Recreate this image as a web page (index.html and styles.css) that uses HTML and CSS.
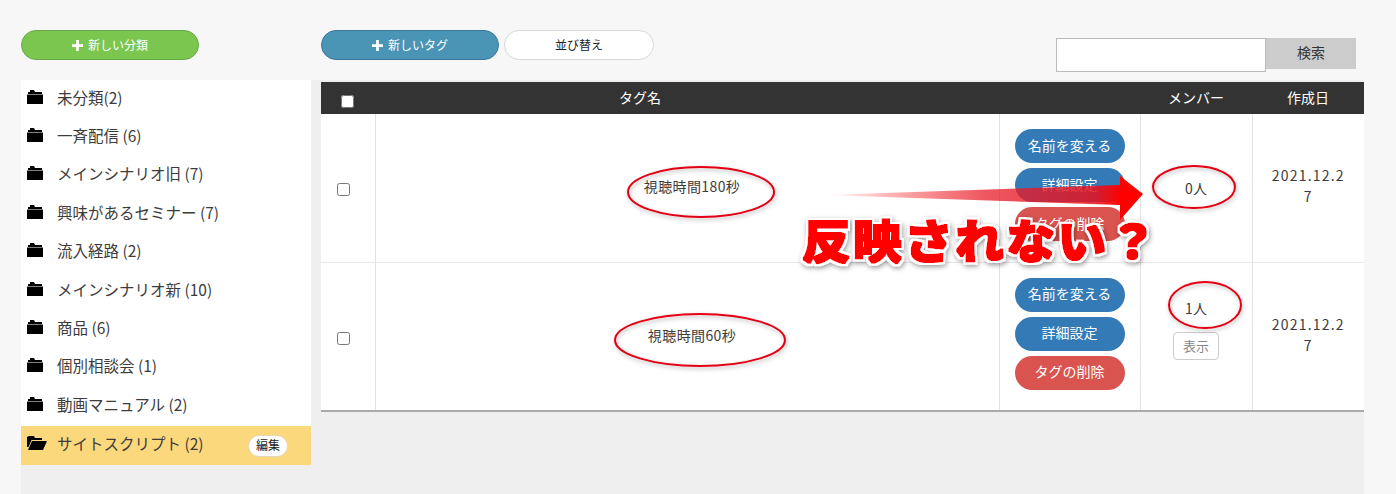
FILE: index.html
```html
<!DOCTYPE html>
<html lang="ja">
<head>
    <meta charset="UTF-8">
    <meta name="viewport" content="width=device-width, initial-scale=1.0">
    <title>タグ管理</title>
    <link rel="stylesheet" href="styles.css">
</head>
<body>
    <svg class="icon-defs" width="0" height="0">
        <symbol id="folder" viewBox="0 0 16 14"><path d="M3 0h4l1 2h7v2H1V2h2zM0 4.600h16V14H0z"/></symbol>
        <symbol id="folder-open" viewBox="0 0 20 14"><path d="M2 0h5l1 2h7v2H4.500L1.500 11H0V1zM5 5h15l-4 9H1z"/></symbol>
        <symbol id="plus" viewBox="0 0 12 12"><path d="M4.500 0h3v4.500H12v3H7.500V12h-3V7.500H0v-3h4.500z"/></symbol>
    </svg>

    <div class="toolbar">
        <div class="toolbar-left">
            <button class="pill pill-green"><svg class="plus"><use href="#plus"/></svg>新しい分類</button>
        </div>
        <div class="toolbar-right">
            <button class="pill pill-blue"><svg class="plus"><use href="#plus"/></svg>新しいタグ</button>
            <button class="pill pill-white">並び替え</button>
            <form class="search">
                <input class="search-input" type="text">
                <button class="search-btn" type="button">検索</button>
            </form>
        </div>
    </div>

    <div class="main">
        <ul class="folders">
            <li><svg class="folder"><use href="#folder"/></svg>未分類(2)</li>
            <li><svg class="folder"><use href="#folder"/></svg>一斉配信 (6)</li>
            <li><svg class="folder"><use href="#folder"/></svg>メインシナリオ旧 (7)</li>
            <li><svg class="folder"><use href="#folder"/></svg>興味があるセミナー (7)</li>
            <li><svg class="folder"><use href="#folder"/></svg>流入経路 (2)</li>
            <li><svg class="folder"><use href="#folder"/></svg>メインシナリオ新 (10)</li>
            <li><svg class="folder"><use href="#folder"/></svg>商品 (6)</li>
            <li><svg class="folder"><use href="#folder"/></svg>個別相談会 (1)</li>
            <li><svg class="folder"><use href="#folder"/></svg>動画マニュアル (2)</li>
            <li class="selected"><svg class="folder folder-wide"><use href="#folder-open"/></svg>サイトスクリプト (2)<button class="edit-btn">編集</button></li>
        </ul>

        <div class="tags">
            <table class="tag-table">
                <thead>
                    <tr>
                        <th class="col-check"><input type="checkbox"></th>
                        <th class="col-name">タグ名</th>
                        <th class="col-actions"></th>
                        <th class="col-member">メンバー</th>
                        <th class="col-date">作成日</th>
                    </tr>
                </thead>
                <tbody>
                    <tr>
                        <td class="check-cell"><input type="checkbox"></td>
                        <td class="name-cell">視聴時間180秒</td>
                        <td class="actions">
                            <button class="act act-blue">名前を変える</button>
                            <button class="act act-blue">詳細設定</button>
                            <button class="act act-red">タグの削除</button>
                        </td>
                        <td>0人</td>
                        <td class="date">2021.12.27</td>
                    </tr>
                    <tr>
                        <td class="check-cell"><input type="checkbox"></td>
                        <td class="name-cell">視聴時間60秒</td>
                        <td class="actions">
                            <button class="act act-blue">名前を変える</button>
                            <button class="act act-blue">詳細設定</button>
                            <button class="act act-red">タグの削除</button>
                        </td>
                        <td class="member-cell">1人<button class="show-btn">表示</button></td>
                        <td class="date">2021.12.27</td>
                    </tr>
                </tbody>
            </table>
        </div>
    </div>

    <!-- hand drawn annotation on top of the screenshot -->
    <svg class="marks" viewBox="0 0 1396 494">
        <defs>
            <linearGradient id="arrowFade" x1="825" y1="0" x2="1143" y2="0" gradientUnits="userSpaceOnUse">
                <stop offset="0" stop-color="#f00" stop-opacity="0"/>
                <stop offset="0.5" stop-color="#e8202c" stop-opacity="0.75"/>
                <stop offset="0.85" stop-color="#e8101c" stop-opacity="0.85"/>
                <stop offset="0.93" stop-color="#f00"/>
            </linearGradient>
            <filter id="soft" x="-20%" y="-20%" width="140%" height="150%">
                <feDropShadow dx="1" dy="2" stdDeviation="2" flood-color="#000" flood-opacity="0.3"/>
            </filter>
            <filter id="outline" x="-5%" y="-20%" width="110%" height="140%">
                <feMorphology in="SourceGraphic" operator="dilate" radius="0.8" result="fat"/>
                <feMorphology in="SourceAlpha" operator="dilate" radius="3" result="wide"/>
                <feGaussianBlur in="wide" stdDeviation="0.6" result="wideSoft"/>
                <feFlood flood-color="#fff"/>
                <feComposite in2="wideSoft" operator="in" result="white"/>
                <feDropShadow in="white" dx="1" dy="2" stdDeviation="2.500" flood-color="#000" flood-opacity="0.4" result="halo"/>
                <feMerge>
                    <feMergeNode in="halo"/>
                    <feMergeNode in="fat"/>
                </feMerge>
            </filter>
        </defs>
        <path class="arrow" d="M825 195L1120 185V176L1143 194L1120 220V205Z"/>
        <ellipse class="ring" cx="701" cy="192" rx="73" ry="25"/>
        <ellipse class="ring" cx="700" cy="340" rx="85" ry="26"/>
        <ellipse class="ring" cx="1194" cy="187" rx="41" ry="21"/>
        <ellipse class="ring" cx="1205" cy="305" rx="36" ry="23"/>
        <text class="shout" transform="translate(802 258) scale(1.06 1)">反映されない？</text>
    </svg>
</body>
</html>
```

FILE: styles.css
```css
html, body {
    height: 100%;
}
body {
    position: relative;
    display: flex;
    flex-direction: column;
    margin: 0;
    overflow: hidden;
    background: #f7f7f7;
    color: #3c3c3c;
    font-family: "Noto Sans CJK JP", "Noto Sans", sans-serif;
    font-size: 14px;
}
button {
    font-family: inherit;
    cursor: pointer;
}
.icon-defs {
    position: absolute;
}

/* top bar */
.toolbar {
    display: flex;
    height: 80px;
    padding-left: 21px;
    box-sizing: border-box;
}
.toolbar-left {
    width: 300px;
    padding-top: 30px;
}
.toolbar-right {
    display: flex;
    align-items: flex-start;
    gap: 5px;
    padding-top: 30px;
}
.pill {
    display: flex;
    align-items: center;
    justify-content: center;
    height: 30px;
    padding: 0;
    border-radius: 15px;
    font-size: 12px;
    line-height: 1;
}
.pill-green {
    width: 178px;
    border: 1px solid #68a84c;
    background: #7ac64f;
    color: #fff;
}
.pill-blue {
    width: 178px;
    border: 1px solid #3a769c;
    background: #4a94b5;
    color: #fff;
}
.pill-white {
    width: 150px;
    border: 1px solid #d8d8d8;
    background: #fff;
    color: #222;
}
.plus {
    width: 11px;
    height: 11px;
    margin-right: 5px;
    fill: #fff;
}
.search {
    display: flex;
    align-items: flex-start;
    margin: 8px 0 0 397px;
}
.search-input {
    width: 210px;
    height: 34px;
    padding: 0;
    box-sizing: border-box;
    border: 1px solid #bbb;
    background: #fff;
}
.search-btn {
    width: 90px;
    height: 31px;
    padding: 0 0 4px;
    border: 0;
    background: #ccc;
    color: #333;
    font-size: 14px;
}

/* page body */
.main {
    display: flex;
    flex: 1;
    margin: 0 32px 0 21px;
    background: #efefef;
}
.folders {
    display: grid;
    grid-template-rows: repeat(9, 38.4px) 39.4px;
    width: 290px;
    height: 385px;
    margin: 0;
    padding: 0;
    list-style: none;
    background: #fff;
}
.folders li {
    display: flex;
    align-items: center;
    padding: 0 0 5px 6px;
    box-sizing: border-box;
    font-size: 15.5px;
}
.folders li.selected {
    background: #fbd87c;
}
.folder {
    flex: none;
    width: 16px;
    height: 14px;
    margin-right: 14px;
    fill: #000;
}
.folder-wide {
    width: 20px;
    margin-right: 10px;
}
.edit-btn {
    flex: none;
    width: 40px;
    height: 22px;
    margin: 6px 23px 0 auto;
    padding: 0 0 2px;
    border: 1px solid #e4d9b8;
    border-radius: 11px;
    background: #fff;
    color: #222;
    font-size: 12px;
}

/* tag table */
.tags {
    padding: 2px 0 0 10px;
    flex: 1;
}
.tag-table {
    width: 1043px;
    table-layout: fixed;
    border-collapse: collapse;
    background: #fff;
    font-size: 14px;
}
.tag-table th, .tag-table td {
    box-sizing: border-box;
}
.tag-table th {
    height: 32px;
    padding: 0 0 3px;
    background: #333;
    color: #fff;
    font-size: 14px;
    font-weight: 400;
}
.tag-table th.col-check {
    padding: 3px 2px 0 0;
}
.tag-table th.col-name {
    padding-right: 94px;
}
.tag-table td {
    height: 148px;
    padding: 0;
    border-left: 1px solid #e2e2e2;
    border-bottom: 1px solid #e8e8e8;
    text-align: center;
    vertical-align: middle;
}
.tag-table td:first-child {
    border-left: 0;
}
.tag-table tbody tr:last-child td {
    height: 149px;
    border-bottom: 2px solid #aaa;
}
.tag-table td.check-cell {
    padding-right: 8px;
}
.tag-table td.name-cell {
    padding: 0 0 3px 10px;
    letter-spacing: 0.4px;
}
.tag-table input[type="checkbox"] {
    width: 13px;
    height: 13px;
    margin: 0;
    vertical-align: middle;
}
.col-check { width: 54px; }
.col-actions { width: 141px; }
.col-member { width: 112px; }
.col-date { width: 112px; }
.tag-table td.actions {
    padding-bottom: 5px;
}
.act {
    display: block;
    width: 110px;
    height: 34px;
    margin: 0 auto 5px;
    padding: 0 0 3px;
    border: 0;
    border-radius: 17px;
    color: #fff;
    font-size: 14px;
}
.act:last-child {
    margin-bottom: 0;
}
.act-blue { background: #337ab7; }
.act-red { background: #d9534f; }
.tag-table td.date {
    padding: 0 16px 3px;
    letter-spacing: 1.2px;
    line-height: 21px;
    word-break: break-all;
}
.tag-table td.member-cell {
    padding-bottom: 14px;
    line-height: 20px;
}
.show-btn {
    display: block;
    width: 46px;
    height: 28px;
    margin: 14px auto 0;
    padding: 0 0 2px;
    border: 1px solid #ccc;
    border-radius: 4px;
    background: #fff;
    color: #888;
    font-size: 13px;
}

/* annotation */
.marks {
    position: absolute;
    top: 0;
    left: 0;
    width: 1396px;
    height: 494px;
    pointer-events: none;
}
.arrow {
    fill: url(#arrowFade);
}
.ring {
    fill: none;
    stroke: #e30613;
    stroke-width: 2;
    filter: url(#soft);
}
.shout {
    fill: #f00;
    font-size: 46px;
    font-weight: 900;
    letter-spacing: 2.2px;
    filter: url(#outline);
}
```
